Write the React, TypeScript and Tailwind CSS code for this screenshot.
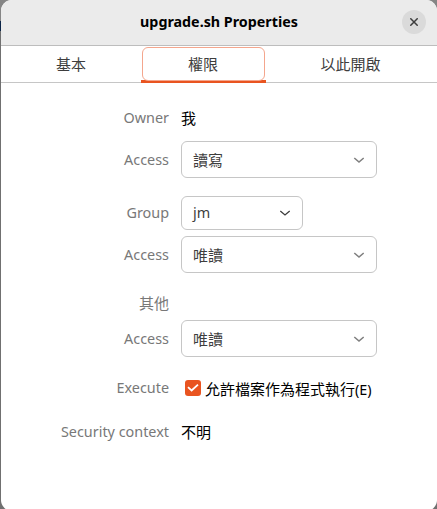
import type { ReactNode } from "react";

function Chevron({ className }: { className: string }) {
  return (
    <svg className={className} width="12" height="8" viewBox="0 0 12 8" fill="none" stroke="currentColor">
      <path d="M1.3 2 6 6l4.7-4" />
    </svg>
  );
}

function Label({ children }: { children: ReactNode }) {
  return <div className="w-[168px] shrink-0 whitespace-nowrap text-right text-[#787878]">{children}</div>;
}

function Latin({ children }: { children: ReactNode }) {
  return <span className="block text-[14.4px]">{children}</span>;
}

function Row({ label, className, children }: { label: ReactNode; className: string; children?: ReactNode }) {
  return (
    <div className={`flex items-center gap-3 ${className}`}>
      <Label>{label}</Label>
      {children}
    </div>
  );
}

function Select({ value, className, arrow }: { value: ReactNode; className: string; arrow: string }) {
  return (
    <button className={`flex items-center justify-between rounded-[6px] border border-[#c6c6c6] bg-white px-[11px] text-[#3d3d3d] ${className}`}>
      <span>{value}</span>
      <Chevron className={arrow} />
    </button>
  );
}

const accessArrow = "stroke-[1.6] text-[#808080]";

export default function App() {
  return (
    <div className="h-[509px] w-[437px] overflow-hidden bg-[linear-gradient(to_bottom,#858585_0_21px,#0b2447_21px_31px,#707070_31px)] pl-px font-['Noto_Sans','Noto_Sans_CJK_TC',sans-serif] text-[15px] leading-5">
      <div className="flex h-[511px] flex-col overflow-hidden rounded-[11px] bg-white">
        <header className="flex h-[46px] shrink-0 items-center border-b border-[#bdbdbd] bg-[#ebebeb] pr-[11px]">
          <div className="w-[35px]" />
          <h1 className="flex-1 whitespace-nowrap pb-[2px] text-center text-[14.3px] font-bold text-black">
            upgrade.sh Properties
          </h1>
          <button aria-label="Close" className="mb-[2px] flex size-6 items-center justify-center rounded-full bg-[#dadada] text-[#3d3d3d]">
            <svg width="8" height="8" viewBox="0 0 8 8" stroke="currentColor" strokeWidth="1.5">
              <path d="m.3.3 7.4 7.4m0-7.4L.3 7.7" />
            </svg>
          </button>
        </header>

        <nav className="flex h-[37px] shrink-0 border-b border-[#c6c6c6] text-[#3d3d3d]">
          <button className="w-[140px]">基本</button>
          <button className="h-[37px] w-[125px] shrink-0 border-b-[3px] border-[#e95420] px-px pt-px">
            <span className="flex h-[34px] items-center justify-center rounded-[6px] border border-[#f4a68d] pr-px">權限</span>
          </button>
          <button className="flex-1 pr-[2px]">以此開啟</button>
        </nav>

        <main className="flex flex-col pt-[25px]">
          <Row label={<Latin>Owner</Latin>} className="h-5"><span>我</span></Row>
          <Row label={<Latin>Access</Latin>} className="mt-[13px] h-[37px]">
            <Select value="讀寫" className="h-[37px] w-[196px]" arrow={accessArrow} />
          </Row>
          <Row label={<Latin>Group</Latin>} className="mt-[18px] h-[34px]">
            <Select value={<Latin>jm</Latin>} className="h-[34px] w-[122px]" arrow="stroke-[1.3] text-[#3d3d3d]" />
          </Row>
          <Row label={<Latin>Access</Latin>} className="mt-[6px] h-[37px]">
            <Select value="唯讀" className="h-[37px] w-[196px]" arrow={accessArrow} />
          </Row>
          <Row label="其他" className="mt-5 h-5" />
          <Row label={<Latin>Access</Latin>} className="mt-[7px] h-[37px]">
            <Select value="唯讀" className="h-[37px] w-[196px]" arrow={accessArrow} />
          </Row>
          <Row label={<Latin>Execute</Latin>} className="mt-[21px] h-5">
            <label className="flex items-center gap-1 pl-1">
              <span className="mb-px flex size-4 items-center justify-center rounded-[3px] bg-[#e95420]">
                <svg width="12" height="10" viewBox="0 0 12 10" fill="none" stroke="white" strokeWidth="1.8">
                  <path d="m1 4.2 3.6 3.3L11 1.6" />
                </svg>
              </span>
              <span className="whitespace-nowrap pt-[2px]">允許檔案作為程式執行<span className="text-[14.4px]">(E)</span></span>
            </label>
          </Row>
          <Row label={<Latin>Security context</Latin>} className="mt-6 h-5"><span>不明</span></Row>
        </main>
      </div>
    </div>
  );
}
